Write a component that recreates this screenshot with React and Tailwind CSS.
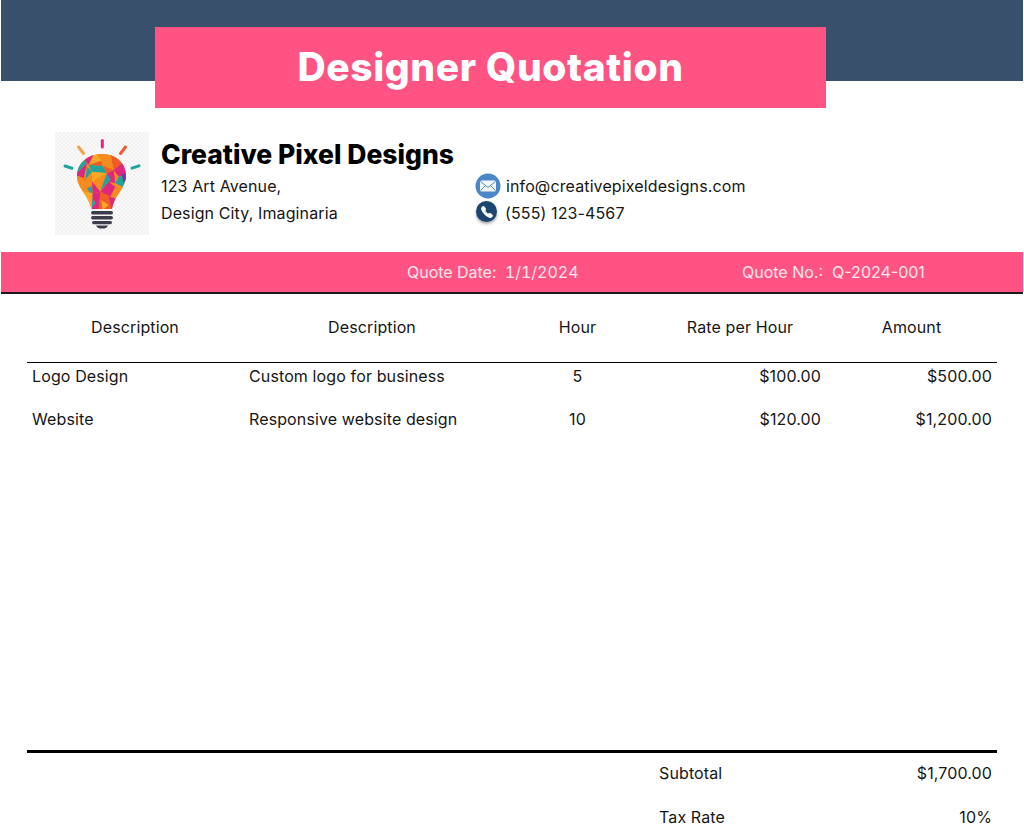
import { BsTelephoneFill } from "react-icons/bs";

const font = { fontFamily: '"Inter", "Liberation Sans", sans-serif' };

const items = [
  { name: "Logo Design", desc: "Custom logo for business", hour: "5", rate: "$100.00", amount: "$500.00" },
  { name: "Website", desc: "Responsive website design", hour: "10", rate: "$120.00", amount: "$1,200.00" },
];

// bulb mosaic, in 3x coordinates of the bulb area
const facets = [
  ["#1fa5a0", "10,75 30,22 45,40"],
  ["#e0277f", "10,75 45,40 35,85"],
  ["#e0277f", "30,22 70,5 50,45"],
  ["#f68b1f", "70,5 115,12 88,32"],
  ["#f9a825", "50,45 70,5 88,32"],
  ["#f15a29", "50,45 88,32 92,48"],
  ["#f15a29", "115,12 155,35 125,60"],
  ["#f68b1f", "88,32 115,12 125,60 92,48"],
  ["#1fa5a0", "50,45 92,48 105,70 60,65"],
  ["#e0277f", "125,60 155,35 170,70 140,80"],
  ["#1fa5a0", "140,80 170,70 150,115 130,100"],
  ["#6a3fa0", "148,72 170,70 155,100"],
  ["#f68b1f", "10,75 35,85 45,112 22,120"],
  ["#f15a29", "35,85 40,88 45,112"],
  ["#1fa5a0", "45,50 60,65 40,88"],
  ["#f9a825", "60,65 105,70 60,95"],
  ["#e0277f", "105,70 125,60 130,100 110,95"],
  ["#f15a29", "92,48 125,60 105,70"],
  ["#f68b1f", "60,95 105,70 85,125"],
  ["#1fa5a0", "105,70 116,90 85,122"],
  ["#f68b1f", "130,100 155,112 125,150 115,120"],
  ["#e0277f", "85,125 110,95 130,110 115,140"],
  ["#f68b1f", "40,88 60,95 62,130 28,122"],
  ["#e0277f", "60,95 85,125 62,130"],
  ["#1fa5a0", "45,115 60,108 62,142"],
  ["#f9a825", "28,122 62,130 60,180 40,150"],
  ["#e0277f", "62,130 85,125 80,180 60,180"],
  ["#f15a29", "85,125 115,140 122,180 80,180"],
  ["#1fa5a0", "62,145 72,160 60,172"],
  ["#e0277f", "110,140 130,145 120,180"],
  ["#f9a825", "88,150 110,165 92,180"],
];

function BulbLogo() {
  return (
    <svg width="94" height="103" viewBox="0 0 94 103" className="shrink-0">
      <defs>
        <pattern id="checker" width="4" height="4" patternUnits="userSpaceOnUse">
          <rect width="4" height="4" fill="#f9f9f9" />
          <rect width="2" height="2" fill="#f2f2f2" />
          <rect x="2" y="2" width="2" height="2" fill="#f2f2f2" />
        </pattern>
        <clipPath id="bulb">
          <path d="M47 22C33 22 22 31 22 44C22 56 33 62 36.5 77H57C60 62 71 56 71 44C71 31 61 22 47 22Z" />
        </clipPath>
      </defs>
      <rect width="94" height="103" fill="url(#checker)" />
      <g strokeWidth="3" strokeLinecap="round">
        <path d="M47.3 8.5V15" stroke="#e0277f" />
        <path d="M23.5 15L28.5 21.5" stroke="#f6a04d" />
        <path d="M70.5 15L65.5 21.5" stroke="#ef5a33" />
        <path d="M10 34L17 36.2" stroke="#1fa5a0" />
        <path d="M84 33.8L77 36.2" stroke="#1fa5a0" />
      </g>
      <g clipPath="url(#bulb)">
        <rect x="20" y="20" width="54" height="60" fill="#f68b1f" />
        <g transform="translate(17 18) scale(0.3333)">
          {facets.map(([fill, points]) => (
            <polygon key={points} fill={fill} points={points} />
          ))}
        </g>
      </g>
      <g fill="#3b3d4d">
        <rect x="36" y="79" width="22" height="3.4" rx="1.7" />
        <rect x="36" y="84" width="22" height="3.4" rx="1.7" />
        <rect x="37" y="89" width="20" height="3.2" rx="1.6" />
        <path d="M41 93.5H53C52 96 50 96.5 47 96.5C44 96.5 42 96 41 93.5Z" />
      </g>
    </svg>
  );
}

function MailIcon() {
  return (
    <svg width="26" height="26" viewBox="0 0 26 26" className="shrink-0">
      <circle cx="13" cy="13" r="12.5" fill="#4a86c8" />
      <rect x="5" y="7.5" width="16" height="11" rx="1.5" fill="#f3f7fb" />
      <path d="M5.5 8.5L13 14.5L20.5 8.5M5.5 17.5L10.5 12.5M20.5 17.5L15.5 12.5" fill="none" stroke="#4a86c8" strokeWidth="1" />
    </svg>
  );
}

function PhoneIcon() {
  return (
    <span className="mb-[3px] flex h-[21px] w-[21px] shrink-0 items-center justify-center rounded-full bg-[#1c4570] text-white shadow-[0_2px_3px_rgba(0,0,0,0.35)]">
      <BsTelephoneFill className="h-[12px] w-[12px]" />
    </span>
  );
}

export default function App() {
  return (
    <div className="h-[840px] overflow-hidden bg-white text-[16px] leading-[26px] tracking-[0.12px] text-[#161616]" style={font}>
      <div className="mx-px h-[81px] bg-[#39506d] pt-[27px] pl-[154px]">
        <div className="flex h-[81px] w-[671px] items-center justify-center bg-[#fe5383]">
          <h1 className="pb-0.5 text-[39px] font-extrabold leading-none tracking-[0.6px] text-white">Designer Quotation</h1>
        </div>
      </div>

      <div className="ml-[55px] mt-[51px] flex h-[103px]">
        <BulbLogo />
        <div className="ml-3 pt-1.5">
          <h2 className="h-[32px] text-[26.5px] font-extrabold leading-[32px] tracking-normal text-black">Creative Pixel Designs</h2>
          <div className="mt-[3px] flex">
            <div className="w-[314px]">
              <p className="h-[27px]">123 Art Avenue,</p>
              <p className="h-[27px]">Design City, Imaginaria</p>
            </div>
            <div>
              <div className="flex h-[27px] items-center gap-[5px] pb-px">
                <MailIcon />
                <span>info@creativepixeldesigns.com</span>
              </div>
              <div className="flex h-[27px] items-center gap-2 pb-px pl-px">
                <PhoneIcon />
                <span>(555) 123-4567</span>
              </div>
            </div>
          </div>
        </div>
      </div>

      <div className="mx-px mt-[17px] flex h-[42px] items-center border-b-2 border-[#1a1a1a] bg-[#fe5383] pb-px tracking-normal text-white/85">
        <span className="ml-[406px] w-[335px] tabular-nums">Quote Date:&nbsp; 1/1/2024</span>
        <span>Quote No.:&nbsp; Q-2024-001</span>
      </div>

      <div className="mx-[27px]">
        <div className="grid h-[69px] grid-cols-[216px_258px_153px_172px_171px] items-center border-b border-black pb-0.5 text-center">
          <span>Description</span>
          <span>Description</span>
          <span>Hour</span>
          <span>Rate per Hour</span>
          <span>Amount</span>
        </div>

        <div className="h-[387px]">
          {items.map((item) => (
            <div key={item.name} className="grid h-[43px] grid-cols-[216px_258px_153px_172px_171px]">
              <span className="px-[5px]">{item.name}</span>
              <span className="pl-1.5 pr-1">{item.desc}</span>
              <span className="text-center">{item.hour}</span>
              <span className="px-[5px] text-right">{item.rate}</span>
              <span className="px-[5px] text-right">{item.amount}</span>
            </div>
          ))}
        </div>

        <div className="border-t-[3px] border-black pt-[7px]">
          <div className="grid h-[44px] grid-cols-[627px_172px_171px]">
            <span />
            <span className="px-[5px]">Subtotal</span>
            <span className="px-[5px] text-right">$1,700.00</span>
          </div>
          <div className="grid h-[44px] grid-cols-[627px_172px_171px]">
            <span />
            <span className="px-[5px]">Tax Rate</span>
            <span className="px-[5px] text-right">10%</span>
          </div>
        </div>
      </div>
    </div>
  );
}
